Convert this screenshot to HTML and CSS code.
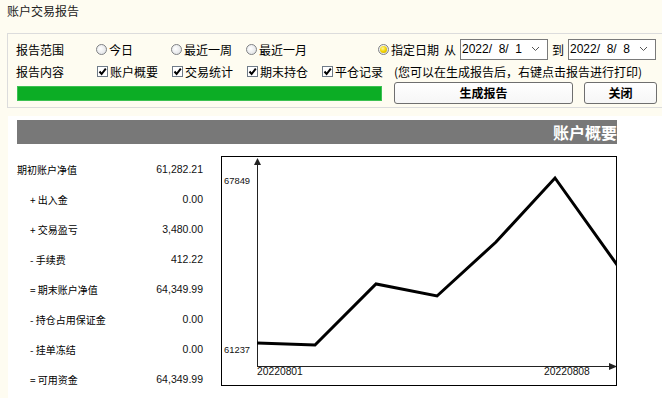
FILE: index.html
```html
<!DOCTYPE html>
<html lang="zh-CN">
<head>
<meta charset="UTF-8">
<title>账户交易报告</title>
<link rel="stylesheet" href="styles.css">
</head>
<body>
<div class="title">账户交易报告</div>

<!-- Options Panel -->
<div class="panel">
  <div class="row row-range">
    <span class="label">报告范围</span>
    <label class="opt w75"><span class="radio"></span>今日</label>
    <label class="opt w75"><span class="radio"></span>最近一周</label>
    <label class="opt w132"><span class="radio"></span>最近一月</label>
    <label class="opt w66"><span class="radio on"></span>指定日期</label>
    <span class="word">从</span>
    <div class="date"><span>2022/&nbsp;&nbsp;8/&nbsp;&nbsp;1</span>
      <svg width="9" height="6" viewBox="0 0 9 6"><path d="M1 1 L4.5 4.5 L8 1" fill="none" stroke="#555" stroke-width="1"/></svg>
    </div>
    <span class="word to">到</span>
    <div class="date"><span>2022/&nbsp;&nbsp;8/&nbsp;&nbsp;8</span>
      <svg width="9" height="6" viewBox="0 0 9 6"><path d="M1 1 L4.5 4.5 L8 1" fill="none" stroke="#555" stroke-width="1"/></svg>
    </div>
  </div>
  <div class="row row-content">
    <span class="label">报告内容</span>
    <label class="opt w75 cb-opt"><span class="check"></span>账户概要</label>
    <label class="opt w75 cb-opt"><span class="check"></span>交易统计</label>
    <label class="opt w75 cb-opt"><span class="check"></span>期末持仓</label>
    <label class="opt w73 cb-opt"><span class="check"></span>平仓记录</label>
    <span class="note">(您可以在生成报告后，右键点击报告进行打印)</span>
  </div>
  <div class="row row-actions">
    <div class="progress"></div>
    <button class="btn btn-make">生成报告</button>
    <button class="btn btn-close">关闭</button>
  </div>
</div>

<!-- Report -->
<div class="report">
  <div class="section-bar">账户概要</div>
  <div class="report-body">
    <div class="summary">
      <div class="item"><span class="name">期初账户净值</span><span class="val">61,282.21</span></div>
      <div class="item sub"><span class="name">+ 出入金</span><span class="val">0.00</span></div>
      <div class="item sub"><span class="name">+ 交易盈亏</span><span class="val">3,480.00</span></div>
      <div class="item sub"><span class="name">- 手续费</span><span class="val">412.22</span></div>
      <div class="item sub"><span class="name">= 期末账户净值</span><span class="val">64,349.99</span></div>
      <div class="item sub"><span class="name">- 持仓占用保证金</span><span class="val">0.00</span></div>
      <div class="item sub"><span class="name">- 挂单冻结</span><span class="val">0.00</span></div>
      <div class="item sub"><span class="name">= 可用资金</span><span class="val">64,349.99</span></div>
    </div>
    <div class="chart">
      <svg width="394" height="228" viewBox="0 0 394 228">
        <!-- axes -->
        <line x1="35.5" y1="3" x2="35.5" y2="209.5" stroke="#222" stroke-width="1"/>
        <path d="M35.5 1 L32 8 L39 8 Z" fill="#222"/>
        <line x1="35" y1="209.5" x2="390" y2="209.5" stroke="#222" stroke-width="1"/>
        <path d="M395 209.5 L387 206 L387 213 Z" fill="#222"/>
        <!-- labels -->
        <text x="2" y="27" class="ylab">67849</text>
        <text x="2" y="196" class="ylab">61237</text>
        <text x="35" y="217.5" class="xlab">20220801</text>
        <text x="322" y="217.5" class="xlab">20220808</text>
        <!-- equity line -->
        <polyline points="35,186 93,188 154,127 215,139 274,85 333,21 453,189"
          fill="none" stroke="#000" stroke-width="3" stroke-linejoin="miter"/>
      </svg>
    </div>
  </div>
</div>
</body>
</html>
```

FILE: styles.css
```css
/* General */
html, body {
  height: 100%;
}
body {
  margin: 0;
  background-color: #fefcf1; /* cream */
  color: #000;
  font-family: "Noto Sans CJK SC", "Liberation Sans", sans-serif;
  font-size: 12px;
  overflow: hidden;
}
.title {
  height: 30px;
  padding: 3px 0 0 7px;
  line-height: 16px;
  color: #222;
}
/* Options Panel */
.panel {
  margin-left: 7px;
  border: 1px solid #dcdcdc;
  border-right: none;
  padding: 0 0 3px 8px;
}
.row {
  display: flex;
  align-items: center;
}
.row-range {
  height: 30px;
}
.row-content {
  height: 14px;
}
.row-actions {
  margin-top: 4px;
  height: 22px;
}
.label {
  width: 80px;
  flex-shrink: 0;
}
.opt {
  display: flex;
  align-items: center;
  flex-shrink: 0;
  white-space: nowrap;
}
.w75 { width: 75px; }
.w73 { width: 73px; }
.w66 { width: 66px; }
.w132 { width: 132px; }
.radio {
  width: 9px;
  height: 9px;
  border: 1px solid #7f8184;
  border-radius: 50%;
  background: radial-gradient(circle at 40% 40%, #ffffff 0%, #dfe1e4 85%);
  margin-right: 2px;
  position: relative;
}
.radio.on::after {
  content: "";
  position: absolute;
  left: 1px;
  top: 1px;
  width: 7px;
  height: 7px;
  border-radius: 50%;
  background: radial-gradient(circle at 40% 35%, #fff6a0 0%, #f2d400 50%, #c29a00 100%);
}
.check {
  width: 9px;
  height: 9px;
  border: 1px solid #6f7b88;
  background: #fff url("data:image/svg+xml;utf8,<svg xmlns='http://www.w3.org/2000/svg' width='9' height='9'><path d='M1.5 4.5 L3.6 7 L7.8 1.6' fill='none' stroke='black' stroke-width='2'/></svg>") no-repeat center;
  margin-right: 2px;
  margin-left: 1px;
}
.word {
  width: 16px;
  flex-shrink: 0;
}
.word.to {
  width: 12px;
  margin: 0 4px;
}
.date {
  border: 1px solid #7a7a7a;
  background: #fff;
  display: flex;
  align-items: center;
  justify-content: space-between;
  padding: 0 7px 0 1px;
  box-sizing: border-box;
  width: 88px;
  height: 21px;
  font-family: "Liberation Sans", sans-serif;
  font-size: 12px;
  flex-shrink: 0;
  white-space: nowrap;
}
.note {
  white-space: nowrap;
}
.progress {
  width: 365px;
  height: 15px;
  margin-left: 1px;
  background-color: #0cad25;
  box-shadow: inset 0 0 0 1px #3cc152;
  flex-shrink: 0;
}
.btn {
  height: 22px;
  border: 1px solid #6f6f6f;
  border-radius: 3px;
  background: linear-gradient(#ffffff, #f6f6f6);
  font-family: "Noto Sans CJK SC", sans-serif;
  font-size: 12px;
  font-weight: bold;
  padding: 0;
  line-height: 18px;
  flex-shrink: 0;
}
.btn-make {
  width: 179px;
  margin-left: 12px;
}
.btn-close {
  width: 73px;
  margin-left: 11px;
}
/* Report */
.report {
  margin: 8px 0 0 8px;
  padding: 4px 0 0 9px;
  background-color: #fff;
  height: 278px;
  overflow: hidden;
}
.section-bar {
  width: 600px;
  height: 24px;
  background-color: #787878;
  color: #fff;
  font-size: 16px;
  font-weight: bold;
  line-height: 24px;
  text-align: right;
}
.report-body {
  display: flex;
  align-items: flex-start;
}
.summary {
  width: 204px;
  padding-top: 10px;
  flex-shrink: 0;
}
.item {
  display: flex;
  justify-content: space-between;
  align-items: center;
  width: 186px;
  height: 30px;
}
.item.sub .name {
  padding-left: 13px;
}
.name {
  font-size: 10px;
  white-space: nowrap;
}
.val {
  font-family: "Liberation Sans", sans-serif;
  font-size: 10.5px;
  color: #111;
}
.chart {
  margin-top: 12px;
  width: 394px;
  height: 228px;
  border: 1px solid #000;
}
.chart svg {
  display: block;
  overflow: hidden;
}
.ylab {
  font-family: "Liberation Sans", sans-serif;
  font-size: 9.4px;
  fill: #111;
}
.xlab {
  font-family: "Liberation Sans", sans-serif;
  font-size: 10.3px;
  fill: #111;
}
```
